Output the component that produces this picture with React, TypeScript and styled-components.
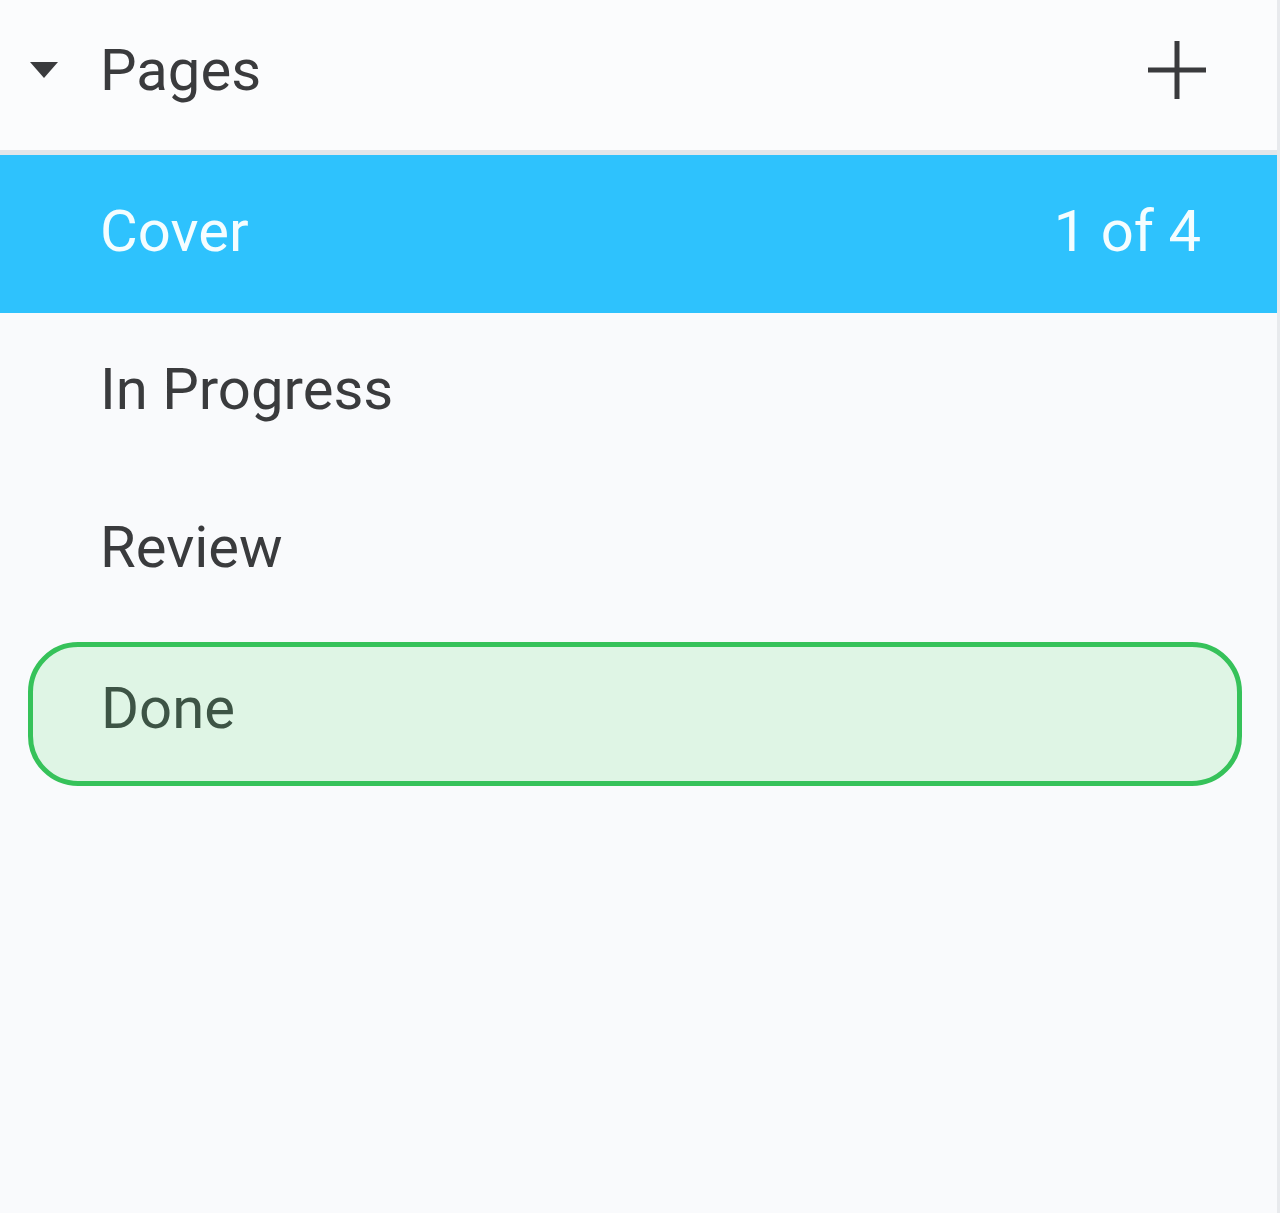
import styled, { createGlobalStyle } from 'styled-components';

const GlobalStyle = createGlobalStyle`
    html, body {
        margin: 0;
        padding: 0;
        background: #f9fafc;
    }
    body {
        font-family: Roboto, 'Liberation Sans', sans-serif;
    }
`;

const pages = ['Cover', 'In Progress', 'Review', 'Done'];

export default function App() {
    return (
        <>
            <GlobalStyle />
            <Panel>
                <Header>
                    <Caret viewBox="0 0 28 16">
                        <path d="M0 0 H28 L14 16 Z" fill="#3a3b3d" />
                    </Caret>
                    <HeaderTitle>Pages</HeaderTitle>
                    <AddButton aria-label="Add page">
                        <svg width="60" height="60" viewBox="0 0 60 60">
                            <path d="M30 1 V59 M1 30 H59" stroke="#3a3b3d" strokeWidth="5" />
                        </svg>
                    </AddButton>
                </Header>
                <List>
                    {pages.map((name, i) => {
                        if (name === 'Done') {
                            return (
                                <DropRow key={name}>
                                    <DropTarget>
                                        <PageName $tone="drop">{name}</PageName>
                                    </DropTarget>
                                </DropRow>
                            );
                        }
                        const selected = i === 0;
                        return (
                            <Row key={name} $selected={selected}>
                                <PageName $tone={selected ? 'selected' : 'normal'}>{name}</PageName>
                                {selected && <Count>1 of {pages.length}</Count>}
                            </Row>
                        );
                    })}
                </List>
            </Panel>
        </>
    );
}

const Panel = styled.div`
    width: 1277px;
    height: 1213px;
    background: #f9fafc;
    border-right: 3px solid #e8eaed;
`;

const Header = styled.div`
    height: 155px;
    display: flex;
    align-items: center;
    padding: 0 70px 10px 30px;
    box-sizing: border-box;
    background: #fbfcfd;
    border-bottom: 5px solid #e2e6ea;
`;

const Caret = styled.svg`
    width: 28px;
    height: 16px;
    margin-right: 42px;
`;

const HeaderTitle = styled.div`
    flex: 1;
    font-size: 58px;
    color: #3a3b3d;
    line-height: 1;
`;

const AddButton = styled.div`
    width: 60px;
    height: 60px;
    display: flex;
`;

const List = styled.div`
    display: flex;
    flex-direction: column;
`;

const Row = styled.div<{ $selected: boolean }>`
    height: 158px;
    box-sizing: border-box;
    display: flex;
    align-items: center;
    justify-content: space-between;
    padding: 0 76px 6px 100px;
    background: ${({ $selected }) => ($selected ? '#2ec2fd' : 'transparent')};
`;

const PageName = styled.span<{ $tone: 'normal' | 'selected' | 'drop' }>`
    font-size: 58px;
    line-height: 1;
    color: ${({ $tone }) =>
        $tone === 'selected' ? '#f4fdff' : $tone === 'drop' ? '#3d5445' : '#3a3b3d'};
`;

const Count = styled.span`
    font-size: 58px;
    line-height: 1;
    color: #f4fdff;
`;

const DropRow = styled.div`
    height: 158px;
    padding: 13px 35px 0 28px;
    box-sizing: border-box;
`;

const DropTarget = styled.div`
    height: 144px;
    box-sizing: border-box;
    display: flex;
    align-items: center;
    padding-left: 68px;
    padding-bottom: 12px;
    background: #dff5e5;
    border: 5px solid #36c25a;
    border-radius: 50px;
`;
